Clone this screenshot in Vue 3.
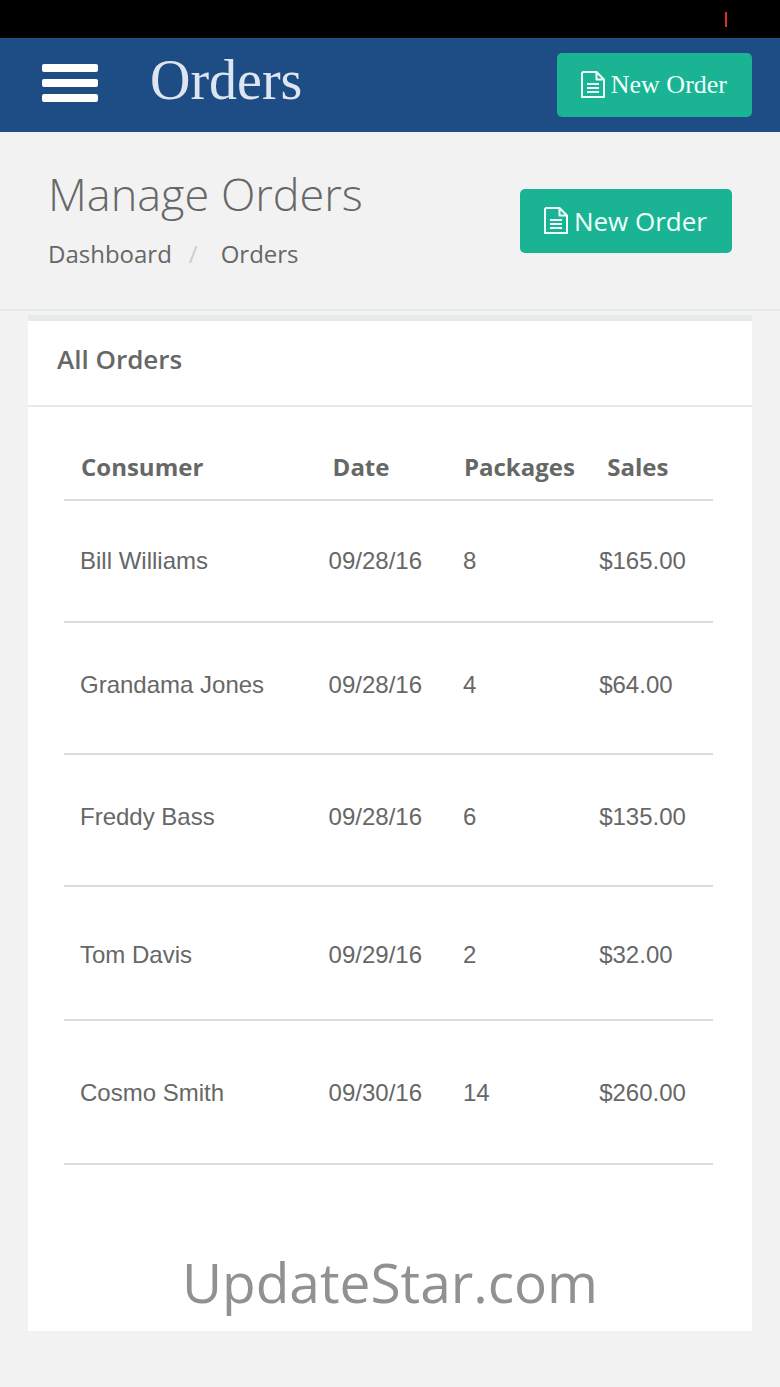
<script setup>
const orders = [
  { consumer: 'Bill Williams', date: '09/28/16', packages: 8, sales: '$165.00', size: 'compact' },
  { consumer: 'Grandama Jones', date: '09/28/16', packages: 4, sales: '$64.00', size: 'regular' },
  { consumer: 'Freddy Bass', date: '09/28/16', packages: 6, sales: '$135.00', size: 'regular' },
  { consumer: 'Tom Davis', date: '09/29/16', packages: 2, sales: '$32.00', size: 'roomy' },
  { consumer: 'Cosmo Smith', date: '09/30/16', packages: 14, sales: '$260.00', size: 'tall' }
]
</script>

<template>
  <div class="page">
    <div class="status"><span class="signal"></span></div>

    <header class="topbar">
      <button class="menu" type="button" aria-label="Menu">
        <span></span><span></span><span></span>
      </button>
      <div class="brand">Orders</div>
      <button class="new-order serif" type="button">
        <svg viewBox="0 0 24 28" aria-hidden="true">
          <path d="M2 1H15.5L23 8.500V26H1V2Z M15.500 1V8.500H23" />
          <path d="M6 13H18 M6 17H18 M6 21H18" />
        </svg>
        <span>New Order</span>
      </button>
    </header>

    <section class="heading">
      <div>
        <h1>Manage Orders</h1>
        <nav class="crumbs" aria-label="Breadcrumb">
          <a href="#dashboard">Dashboard</a>
          <span class="slash">/</span>
          <a href="#orders">Orders</a>
        </nav>
      </div>
      <button class="new-order" type="button">
        <svg viewBox="0 0 24 28" aria-hidden="true">
          <path d="M2 1H15.500L23 8.500V26H1V2Z M15.500 1V8.500H23" />
          <path d="M6 13H18 M6 17H18 M6 21H18" />
        </svg>
        <span>New Order</span>
      </button>
    </section>

    <main class="panel">
      <h2>All Orders</h2>
      <div class="content">
        <table>
          <colgroup>
            <col class="c-consumer" /><col class="c-date" /><col class="c-packages" /><col />
          </colgroup>
          <thead>
            <tr>
              <th scope="col">Consumer</th>
              <th scope="col" class="date">Date</th>
              <th scope="col">Packages</th>
              <th scope="col" class="sales">Sales</th>
            </tr>
          </thead>
          <tbody>
            <tr v-for="o in orders" :key="o.consumer" :class="o.size">
              <td>{{ o.consumer }}</td>
              <td>{{ o.date }}</td>
              <td>{{ o.packages }}</td>
              <td>{{ o.sales }}</td>
            </tr>
          </tbody>
        </table>
      </div>
      <footer>UpdateStar.com</footer>
    </main>
  </div>
</template>

<style>
body {
  margin: 0;
  background: #f2f2f2;
}
</style>

<style scoped>
.page {
  color: #666767;
  font-family: "Open Sans", "Noto Sans", sans-serif;
  padding-bottom: 56px;
}
.status {
  background: #000;
  height: 38px;
  display: flex;
  justify-content: flex-end;
  align-items: center;
  padding-right: 53px;
}
.signal {
  width: 2px;
  height: 15px;
  background: #d6302f;
}
.topbar {
  background: #1e4c84;
  height: 94px;
  display: flex;
  align-items: center;
  padding: 0 28px 0 42px;
}
.menu {
  width: 56px;
  padding: 0;
  border: 0;
  background: none;
  display: flex;
  flex-direction: column;
  gap: 7px;
  margin-top: -4px;
}
.menu span {
  height: 8px;
  border-radius: 2px;
  background: #fff;
}
.brand {
  margin: 0 auto 10px 52px;
  font: 56px/64px "Liberation Serif", serif;
  color: #dde5f1;
}
.new-order {
  display: flex;
  align-items: center;
  gap: 6px;
  height: 64px;
  padding: 0 25px 0 24px;
  border: 0;
  border-radius: 5px;
  background: #1ab394;
  color: #effffb;
  font: 26px/36px "Open Sans", "Noto Sans", sans-serif;
  white-space: nowrap;
}
.new-order.serif {
  padding: 0 25px 0 24px;
  font-family: "Liberation Serif", serif;
}
.new-order svg {
  width: 24px;
  height: 28px;
  fill: none;
  stroke: currentColor;
  stroke-width: 2;
  stroke-linejoin: round;
}
.heading {
  display: flex;
  justify-content: space-between;
  align-items: center;
  height: 177px;
  padding: 0 48px;
  border-bottom: 2px solid #e7eaea;
}
h1 {
  margin: 0;
  font-size: 45px;
  line-height: 64px;
  font-weight: 300;
}
.crumbs {
  display: flex;
  gap: 17px;
  font-size: 24px;
  line-height: 36px;
  margin: 10px 0 8px;
}
.crumbs a {
  color: inherit;
  text-decoration: none;
}
.slash {
  margin-right: 6px;
  color: #ccc;
}
.panel {
  margin: 4px 28px 0;
  background: #fff;
  border-top: 6px solid #e7eaea;
}
h2 {
  margin: 0;
  padding: 20px 29px 28px;
  font-size: 26px;
  line-height: 36px;
  font-weight: 600;
  border-bottom: 2px solid #e7eaea;
}
.content {
  padding: 40px 39px 0 36px;
}
table {
  width: 100%;
  table-layout: fixed;
  border-collapse: separate;
  border-spacing: 0;
}
.c-consumer {
  width: 38%;
}
.c-date,
.c-packages {
  width: 21%;
}
th,
td {
  text-align: left;
  padding: 0 0 0 16px;
  border-bottom: 2px solid #dcdcdc;
  white-space: nowrap;
}
th {
  font-size: 24px;
  line-height: 36px;
  font-weight: 700;
  padding-top: 2px;
  padding-bottom: 14px;
  padding-left: 17px;
}
th.date {
  padding-left: 22px;
}
th.sales {
  padding-left: 24px;
}
td {
  font: 24px/32px "Liberation Sans", sans-serif;
}
td:nth-child(2) {
  padding-left: 18px;
}
.compact td {
  padding-top: 44px;
  padding-bottom: 44px;
}
.regular td {
  padding-top: 46px;
  padding-bottom: 52px;
}
.roomy td {
  padding-top: 52px;
  padding-bottom: 48px;
}
.tall td {
  padding-top: 56px;
  padding-bottom: 54px;
}
footer {
  padding: 74px 0 6px;
  text-align: center;
  font-size: 55px;
  line-height: 86px;
  color: #919191;
}
</style>
